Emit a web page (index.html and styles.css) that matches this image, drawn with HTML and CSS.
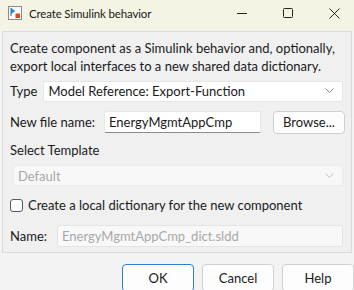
FILE: index.html
```html
<!doctype html>
<html lang="en">
    <head>
        <meta charset="UTF-8" />
        <meta name="viewport" content="width=device-width, initial-scale=1.0" />
        <title>Create Simulink behavior</title>
        <link rel="stylesheet" href="styles.css">
    </head>
    <body>
        <div class="window">
            <div class="titlebar">
                <svg class="app-icon" width="14" height="14" viewBox="0 0 14 14">
                    <rect x="0.5" y="0.5" width="13" height="13" fill="#fafafa" stroke="#8a8a8a" />
                    <path d="M3 2 V8 L7.5 5 Z" fill="#2a8fd6" />
                    <rect x="2.5" y="2" width="1" height="8" fill="#2a6fb0" />
                    <rect x="7.5" y="7.5" width="4.5" height="4.5" fill="#e0471b" />
                </svg>
                <span class="title">Create Simulink behavior</span>
                <div class="caption-buttons">
                    <span class="cap-btn">
                        <svg width="10" height="10" viewBox="0 0 10 10"><path d="M0 5.5 H10" stroke="#222" stroke-width="1" /></svg>
                    </span>
                    <span class="cap-btn">
                        <svg width="10" height="10" viewBox="0 0 10 10"><rect x="0.5" y="0.5" width="9" height="9" rx="1" fill="none" stroke="#222" /></svg>
                    </span>
                    <span class="cap-btn">
                        <svg width="11" height="11" viewBox="0 0 11 11"><path d="M0.5 0.5 L10.5 10.5 M10.5 0.5 L0.5 10.5" stroke="#222" stroke-width="1" /></svg>
                    </span>
                </div>
            </div>

            <div class="body">
                <div class="panel">
                    <p class="intro">Create component as a Simulink behavior and, optionally, export local interfaces to a new shared data dictionary.</p>

                    <div class="row">
                        <span class="label">Type</span>
                        <div class="select">
                            <span>Model Reference: Export-Function</span>
                            <svg class="chevron" width="9" height="6" viewBox="0 0 9 6"><path d="M0.5 0.5 L4.5 4.5 L8.5 0.5" fill="none" stroke="#888" /></svg>
                        </div>
                    </div>

                    <div class="row">
                        <span class="label file-label">New file name:</span>
                        <div class="input">EnergyMgmtAppCmp</div>
                        <button class="btn browse">Browse...</button>
                    </div>

                    <div class="section-label">Select Template</div>
                    <div class="select disabled">
                        <span>Default</span>
                        <svg class="chevron" width="9" height="6" viewBox="0 0 9 6"><path d="M0.5 0.5 L4.5 4.5 L8.5 0.5" fill="none" stroke="#c4c4c4" /></svg>
                    </div>

                    <label class="check-row">
                        <span class="checkbox"></span>
                        <span>Create a local dictionary for the new component</span>
                    </label>

                    <div class="row last">
                        <span class="label">Name:</span>
                        <div class="input disabled">EnergyMgmtAppCmp_dict.sldd</div>
                    </div>
                </div>

                <div class="footer">
                    <button class="btn default">OK</button>
                    <button class="btn">Cancel</button>
                    <button class="btn">Help</button>
                </div>
            </div>
        </div>
    </body>
</html>
```

FILE: styles.css
```css
body {
    margin: 0;
    font-family: Lato, "Noto Sans", sans-serif;
    font-size: 13px;
    color: #1a1a1a;
    background-color: #f3f3f3;
}
.window {
    width: 354px;
    height: 290px;
    overflow: hidden;
}
.titlebar {
    height: 30px;
    display: flex;
    align-items: center;
    background-color: #f5f4e4;
    padding: 0 0 4px 8px;
    box-sizing: border-box;
}
.app-icon {
    flex: none;
}
.title {
    margin-left: 7px;
    font-size: 11.5px;
    letter-spacing: -0.15px;
    color: #1a1a1a;
    flex: 1;
}
.caption-buttons {
    display: flex;
    height: 100%;
    margin-right: -3px;
}
.cap-btn {
    width: 46px;
    display: flex;
    align-items: center;
    justify-content: center;
}
.body {
    padding: 1px 2px 0 2px;
}
.panel {
    background-color: #f0f0f0;
    border: 1px solid #dadada;
    padding: 7px 8px 5px 7px;
}
.intro {
    margin: 0 0 5px;
    line-height: 18px;
}
.row {
    display: flex;
    align-items: center;
    height: 22px;
    margin-bottom: 9px;
}
.row.last {
    margin-bottom: 0;
}
.label {
    margin-right: 6px;
    white-space: nowrap;
}
.file-label {
    margin-right: 9px;
}
.select {
    flex: 1;
    height: 21px;
    background-color: #fff;
    border: 1px solid #e6e6e6;
    border-radius: 2px;
    display: flex;
    align-items: center;
    justify-content: space-between;
    padding: 0 8px 0 4px;
    box-sizing: border-box;
}
.select.disabled {
    background-color: #f8f8f8;
    color: #a8a8a8;
    border-color: #ebebeb;
    margin: 0 0 11px 3px;
}
.input {
    width: 157px;
    height: 22px;
    background-color: #fff;
    border: 1px solid #e6e6e6;
    border-bottom-color: #8a8a8a;
    border-radius: 2px;
    padding: 0 4px;
    box-sizing: border-box;
    line-height: 20px;
    white-space: nowrap;
}
.input.disabled {
    flex: 1;
    background-color: #f8f8f8;
    border-color: #e4e4e4;
    color: #a8a8a8;
    margin-left: 4px;
}
.section-label {
    margin-bottom: 7px;
}
.check-row {
    display: flex;
    align-items: center;
    margin-bottom: 12px;
}
.checkbox {
    width: 13px;
    height: 13px;
    box-sizing: border-box;
    border: 1px solid #5a5a5a;
    border-radius: 3px;
    background-color: #fff;
    margin: 0 5px 0 0;
}
.btn {
    font-family: inherit;
    font-size: 13px;
    color: #1a1a1a;
    background-color: #fdfdfd;
    border: 1px solid #d0d0d0;
    border-radius: 4px;
    height: 23px;
    padding: 0;
}
.browse {
    width: 72px;
    margin-left: auto;
    margin-right: -2px;
}
.footer {
    display: flex;
    justify-content: flex-end;
    gap: 8px;
    padding-top: 11px;
    margin-right: -2px;
}
.footer .btn {
    width: 72px;
    height: 28px;
}
.btn.default {
    border-color: #2d7ed6;
}
```
